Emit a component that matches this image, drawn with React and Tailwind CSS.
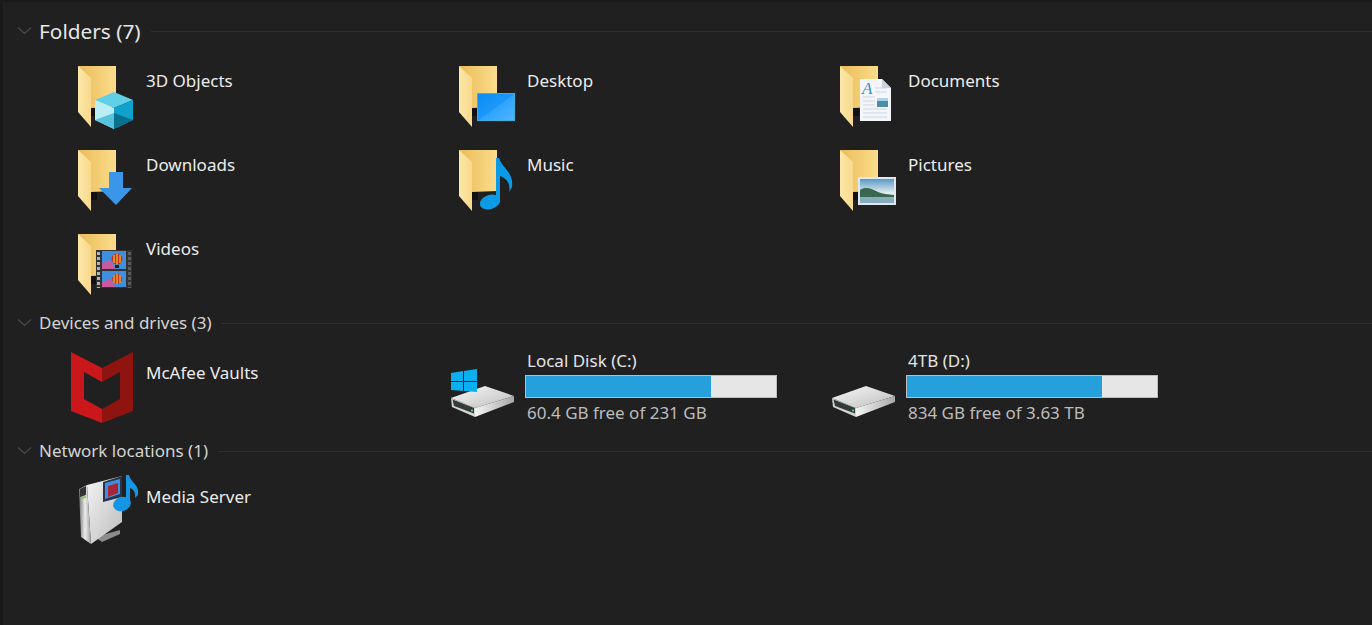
// shared folder, drawn at the top-left of each 68x66 icon box
function Folder({ id }) {
  return (
    <g transform="translate(8 2)">
      <defs>
        <linearGradient id={`back-${id}`} x1="0" y1="0" x2="1" y2="0">
          <stop offset="0" stopColor="#eabc58" />
          <stop offset="1" stopColor="#fbdc8c" />
        </linearGradient>
        <linearGradient id={`leaf-${id}`} x1="0" y1="0" x2="1" y2="0">
          <stop offset="0" stopColor="#fde7a8" />
          <stop offset="1" stopColor="#f8d98c" />
        </linearGradient>
      </defs>
      <path d="M0 0H38V41L13 42V50H18V42H13Z" fill={`url(#back-${id})`} />
      <path d="M13 42H19V50H13Z" fill="#111" />
      <path d="M0 0L13 12V61L0 46Z" fill={`url(#leaf-${id})`} />
    </g>
  )
}

function IconBox({ children }) {
  return (
    <svg width="68" height="66" viewBox="0 0 68 66" className="shrink-0">
      {children}
    </svg>
  )
}

const Cube = () => (
  <IconBox>
    <Folder id="cube" />
    <path d="M44 28L63 36L44 44L25 36Z" fill="#5fd0e6" />
    <path d="M25 36L44 44V65L25 56Z" fill="#b9eef6" />
    <path d="M44 44L63 36V56L44 65Z" fill="#0fa2cc" />
    <path d="M25 56L44 49L44 65Z" fill="#55c4dc" />
    <path d="M63 56L44 49L44 65Z" fill="#07718f" />
  </IconBox>
)

const Desktop = () => (
  <IconBox>
    <defs>
      <linearGradient id="screen" x1="0" y1="0" x2="1" y2="1">
        <stop offset="0" stopColor="#0b8cf2" />
        <stop offset="0.5" stopColor="#1b98fb" />
        <stop offset="0.52" stopColor="#2ea4fc" />
        <stop offset="1" stopColor="#52b4ff" />
      </linearGradient>
    </defs>
    <Folder id="desk" />
    <rect x="26.5" y="29.5" width="37" height="27" fill="url(#screen)" stroke="#3caee0" />
  </IconBox>
)

const Documents = () => (
  <IconBox>
    <Folder id="docs" />
    <path d="M28 15H50L59 24V57H28Z" fill="#f4f6fa" />
    <path d="M50 15V24H59Z" fill="#c9d2dc" />
    <path d="M43 24H55M43 28H55M31 33H43M31 37H43M31 41H43M31 45H55M31 49H55M31 53H55" stroke="#ccd6e2" strokeWidth="1" />
    <text x="30" y="30" fontFamily="Liberation Serif, serif" fontStyle="italic" fontSize="17" fill="#3a90cc">A</text>
    <rect x="45" y="34" width="11" height="9" fill="#4f8ca8" />
    <rect x="45" y="34" width="11" height="3" fill="#a9d4ea" />
  </IconBox>
)

const Download = () => (
  <IconBox>
    <Folder id="down" />
    <path d="M39 24H53V40H62L46 57L29 40H39Z" fill="#3a96e8" />
  </IconBox>
)

const Music = () => (
  <IconBox>
    <Folder id="music" />
    <ellipse cx="39" cy="54" rx="10.5" ry="7" transform="rotate(-18 39 54)" fill="#0a9ae6" />
    <path d="M45 10H48C51 20 63 24 61 39L58 44C60 34 54 30 49 28V54H45Z" fill="#0a9ae6" />
  </IconBox>
)

const Pictures = () => (
  <IconBox>
    <defs>
      <linearGradient id="sky" x1="0" y1="0" x2="0" y2="1">
        <stop offset="0" stopColor="#5a98c4" />
        <stop offset="0.6" stopColor="#e4f0f0" />
      </linearGradient>
    </defs>
    <Folder id="pics" />
    <rect x="26" y="29" width="38" height="28" fill="#dde8f2" />
    <rect x="28" y="31" width="34" height="24" fill="url(#sky)" />
    <path d="M28 42C34 38 40 41 46 44C51 46 56 46 62 47V50H28Z" fill="#38684e" />
    <rect x="28" y="49" width="34" height="6" fill="#86aebc" />
  </IconBox>
)

const Videos = () => (
  <IconBox>
    <Folder id="vid" />
    <rect x="26" y="18" width="36" height="38" fill="#333333" />
    <path d="M28.5 20V56" stroke="#b4b4a8" strokeWidth="3" strokeDasharray="3 2" />
    <path d="M59.5 20V56" stroke="#5c5c5c" strokeWidth="3" strokeDasharray="3 2" />
    <rect x="32" y="19" width="24" height="18" fill="#3f8fe0" />
    <rect x="32" y="39" width="24" height="16" fill="#3f8fe0" />
    <path d="M32 37V31L40 28L46 37Z" fill="#c85aa0" />
    <path d="M32 55V50L40 47L46 55Z" fill="#c85aa0" />
    <circle cx="47" cy="27" r="5.5" fill="#c8301e" />
    <circle cx="47" cy="47" r="5" fill="#c8301e" />
    <path d="M47 21.5V32.5M44 23V31M50 23V31" stroke="#eec030" strokeWidth="1.2" />
    <path d="M47 42V52M44 43V51M50 43V51" stroke="#eec030" strokeWidth="1.2" />
    <rect x="45" y="33" width="4" height="3" fill="#222222" />
  </IconBox>
)

const McAfee = () => (
  <svg width="68" height="76" viewBox="0 0 68 76" className="shrink-0">
    <path d="M1 2L32 18V32L14 22V49L32 59V73L1 61Z" fill="#c9171c" />
    <path d="M63 2L32 18V32L50 22V49L32 59V73L63 61Z" fill="#8f1410" />
  </svg>
)

function Drive({ windows }) {
  const topId = windows ? 'top-c' : 'top-d'
  const sideId = windows ? 'side-c' : 'side-d'
  return (
    <svg width="68" height="56" viewBox="0 0 68 56" className="shrink-0">
      <defs>
        <linearGradient id={topId} x1="0" y1="0" x2="1" y2="1">
          <stop offset="0" stopColor="#f8f8f8" />
          <stop offset="1" stopColor="#bdbdbd" />
        </linearGradient>
        <linearGradient id={sideId} x1="0" y1="0" x2="1" y2="0">
          <stop offset="0" stopColor="#f4f4f4" />
          <stop offset="1" stopColor="#a8a8a8" />
        </linearGradient>
      </defs>
      <path d="M0 32L34 20L63 30L24 42Z" fill={`url(#${topId})`} />
      <path d="M24 42L63 30V36L24 51Z" fill={`url(#${sideId})`} />
      <path d="M0 32L24 42V51L1 41Z" fill="#d4d4d4" />
      <path d="M1.5 33.5L23 42V47.5L3 40Z" fill="#343a36" />
      <circle cx="21" cy="44.5" r="1.1" fill="#5fe08a" />
      {windows && (
        <g fill="#0ab0ee">
          <path d="M0 7L12 5V15H0Z" />
          <path d="M13 5L26 3V15H13Z" />
          <path d="M0 16H12V25L0 24Z" />
          <path d="M13 16H26V26L13 25Z" />
        </g>
      )}
    </svg>
  )
}

const MediaServer = () => (
  <svg width="68" height="72" viewBox="0 0 68 72" className="shrink-0">
    <defs>
      <linearGradient id="tower" x1="0" y1="0" x2="1" y2="1">
        <stop offset="0" stopColor="#f4f4f4" />
        <stop offset="1" stopColor="#bcbcbc" />
      </linearGradient>
      <linearGradient id="front" x1="0" y1="0" x2="1" y2="0">
        <stop offset="0" stopColor="#777777" />
        <stop offset="0.5" stopColor="#ececec" />
        <stop offset="1" stopColor="#a0a0a0" />
      </linearGradient>
    </defs>
    <path d="M25 63L50 56V60L32 68Z" fill="#8c8c8c" />
    <path d="M17 11L52 2V48L21 70Z" fill="url(#tower)" />
    <path d="M9 15L17 11L21 70L11 63Z" fill="url(#front)" />
    <path d="M10 15L16 12V21L10 23Z" fill="#333333" />
    <path d="M11 23L16 22V24L11 25Z" fill="#7ed04a" />
    <path d="M33 8L52 2V23L33 28Z" fill="#26354a" />
    <path d="M35 9L50 5V20L35 25Z" fill="#3f8fe0" />
    <path d="M38 12L48 9V19L38 23Z" fill="#a82434" />
    <ellipse cx="52" cy="30" rx="9" ry="7" transform="rotate(-18 52 30)" fill="#1596e4" />
    <path d="M56 1H59C60 8 70 11 68 21L65 24C66 18 63 15 60 14V30H56Z" fill="#1596e4" />
  </svg>
)

function Section({ title, large, className, children }) {
  return (
    <section className={className}>
      <div className="flex items-center">
        <svg width="16" height="10" viewBox="0 0 16 10" className="ml-[17px] shrink-0">
          <path d="M1 1.5L7.5 7.5L14 1.5" fill="none" stroke="#4c4c4c" strokeWidth="1.2" />
        </svg>
        <h2 className={large ? 'ml-[6px] text-[20.8px] leading-[32px] text-[#e6e6e6]' : 'ml-[6px] text-[17px] leading-[22px] text-[#d4d4d4]'}>
          {title}
        </h2>
        <div className="ml-[10px] h-px flex-1 bg-[#2f2f2f]" />
      </div>
      {children}
    </section>
  )
}

function Item({ icon, label }) {
  return (
    <div className="flex h-[84px] items-start gap-2 pt-[2px]">
      {icon}
      <span className="pt-[6px] text-[17px] leading-[22px] text-[#ececec]">{label}</span>
    </div>
  )
}

function DriveItem({ label, free, used, windows }) {
  return (
    <div className="flex h-[84px] items-start gap-[6px] pt-[4px]">
      <div className="pt-[16px]">
        <Drive windows={windows} />
      </div>
      <div className="w-[252px]">
        <div className="ml-[2px] text-[17px] leading-[22px] text-[#e4e4e4]">{label}</div>
        <div className="mt-[3px] h-[23px] border border-[#bcbcbc] bg-[#e6e6e6]">
          <div className="h-full bg-[#26a0da]" style={{ width: `${used}%` }} />
        </div>
        <div className="ml-[2px] mt-[4px] text-[17px] leading-[22px] text-[#bcbcbc]">{free}</div>
      </div>
    </div>
  )
}

export default function App() {
  return (
    <div className="h-[625px] w-full overflow-hidden border-l-[3px] border-t-2 border-[#191919] bg-[#202020] font-['Noto_Sans','Open_Sans',sans-serif]">
      <Section title="Folders (7)" large className="-ml-[3px] pt-[13px]">
        <div className="mt-[15px] grid grid-cols-[381px_381px_381px] pl-[70px]">
          <Item icon={<Cube />} label="3D Objects" />
          <Item icon={<Desktop />} label="Desktop" />
          <Item icon={<Documents />} label="Documents" />
          <Item icon={<Download />} label="Downloads" />
          <Item icon={<Music />} label="Music" />
          <Item icon={<Pictures />} label="Pictures" />
          <Item icon={<Videos />} label="Videos" />
        </div>
      </Section>

      <Section title="Devices and drives (3)" className="-ml-[3px] -mt-[2px]">
        <div className="mt-[12px] grid grid-cols-[381px_381px_381px] pl-[70px]">
          <div className="flex h-[84px] items-start gap-2 pt-[4px]">
            <McAfee />
            <span className="pt-[12px] text-[17px] leading-[22px] text-[#ececec]">McAfee Vaults</span>
          </div>
          <DriveItem label="Local Disk (C:)" free="60.4 GB free of 231 GB" used={74} windows />
          <DriveItem label="4TB (D:)" free="834 GB free of 3.63 TB" used={78} />
        </div>
      </Section>

      <Section title="Network locations (1)" className="-ml-[3px] mt-[10px]">
        <div className="mt-[10px] flex items-start gap-2 pl-[70px] pt-[2px]">
          <MediaServer />
          <span className="pt-[12px] text-[17px] leading-[22px] text-[#ececec]">Media Server</span>
        </div>
      </Section>
    </div>
  )
}
